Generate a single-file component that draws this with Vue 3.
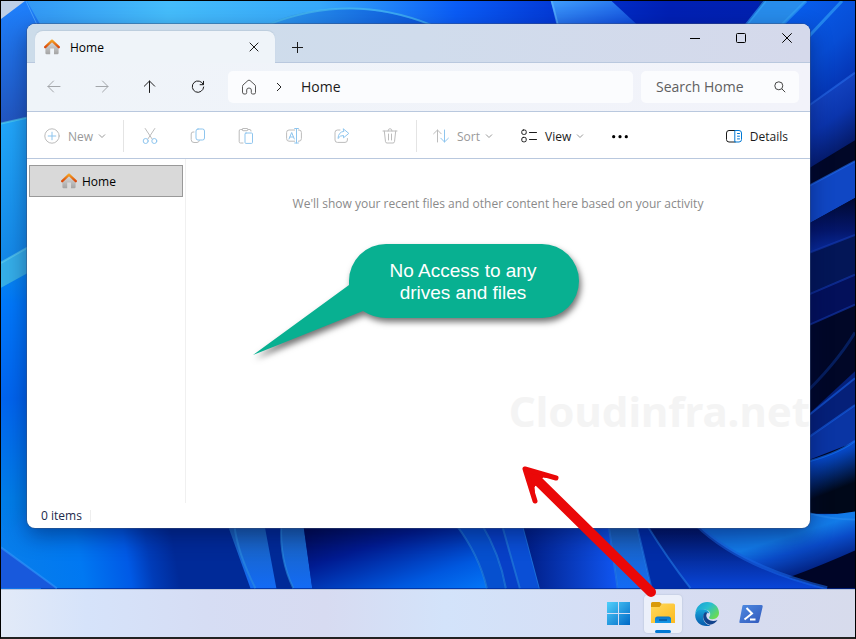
<script setup>
import { ref } from 'vue'

const searchText = ref('')
</script>

<template>
  <div class="desktop">
    <svg class="wallpaper" viewBox="0 0 856 639" preserveAspectRatio="none" aria-hidden="true">
      <defs>
        <linearGradient id="wTop" x1="0" x2="1"><stop offset="0" stop-color="#2f92f4" /><stop offset=".22" stop-color="#45bdfb" /><stop offset=".42" stop-color="#36a8fa" /><stop offset=".6" stop-color="#0a5cf6" /><stop offset=".76" stop-color="#0232cf" /><stop offset=".88" stop-color="#0020b4" /><stop offset="1" stop-color="#0021b0" /></linearGradient>
        <linearGradient id="wArc" x1="0" x2="1"><stop offset="0" stop-color="#2d9bf0" /><stop offset="1" stop-color="#0a55dd" /></linearGradient>
        <linearGradient id="wPetal" x1="0" x2="1" y2="1"><stop offset="0" stop-color="#3f9dfc" /><stop offset="1" stop-color="#0840d8" /></linearGradient>
        <linearGradient id="wDown" x2="0" y2="1"><stop offset="0" stop-color="#1e80fc" /><stop offset="1" stop-color="#2254bd" /></linearGradient>
        <linearGradient id="wLeft" x2="0" y2="1"><stop offset="0" stop-color="#0a88ee" /><stop offset=".12" stop-color="#0078fa" /><stop offset=".4" stop-color="#0064ee" /><stop offset=".7" stop-color="#007de8" /><stop offset="1" stop-color="#117bf2" /></linearGradient>
        <linearGradient id="wCyan" x2="0" y2="1"><stop offset="0" stop-color="#22a8fa" /><stop offset="1" stop-color="#1386e6" /></linearGradient>
        <linearGradient id="bA" gradientUnits="userSpaceOnUse" x1="0" y1="560" x2="170" y2="530"><stop offset="0" stop-color="#087eea" /><stop offset=".45" stop-color="#0078f2" /><stop offset=".72" stop-color="#005ae6" /><stop offset=".85" stop-color="#003cb8" /><stop offset="1" stop-color="#002a98" /></linearGradient>
        <linearGradient id="bB" x1="0" y1="0" x2="1" y2="1"><stop offset="0" stop-color="#000645" /><stop offset=".35" stop-color="#001b91" /><stop offset=".75" stop-color="#0058df" /><stop offset="1" stop-color="#0476f8" /></linearGradient>
        <linearGradient id="bBand" x2="0" y2="1"><stop offset="0" stop-color="#1b62b5" /><stop offset="1" stop-color="#136bf5" /></linearGradient>
        <linearGradient id="bC" x1="0" x2="1"><stop offset="0" stop-color="#001c83" /><stop offset="1" stop-color="#1056f2" /></linearGradient>
        <linearGradient id="bD" x2="0" y2="1"><stop offset="0" stop-color="#01115b" /><stop offset="1" stop-color="#0845d8" /></linearGradient>
        <linearGradient id="rBlue" x1="0" y1="0" x2=".5" y2="1"><stop offset="0" stop-color="#0868fb" /><stop offset=".5" stop-color="#074dd5" /><stop offset="1" stop-color="#011184" /></linearGradient>
        <linearGradient id="rMid" x1="0" y1="0" x2=".35" y2="1"><stop offset="0" stop-color="#1a52d6" /><stop offset=".55" stop-color="#0b35ad" /><stop offset="1" stop-color="#020d48" /></linearGradient>
        <linearGradient id="rDark" x2="0" y2="1"><stop offset="0" stop-color="#000930" /><stop offset=".55" stop-color="#04166a" /><stop offset="1" stop-color="#0930a8" /></linearGradient>
        <linearGradient id="rFade" x2=".3" y2="1"><stop offset="0" stop-color="#0c65f7" /><stop offset=".35" stop-color="#0646c0" /><stop offset=".8" stop-color="#000819" /></linearGradient>
        <linearGradient id="rFoot" gradientUnits="userSpaceOnUse" x1="780" y1="516" x2="800" y2="580"><stop offset="0" stop-color="#1270e0" /><stop offset=".35" stop-color="#127be8" /><stop offset=".6" stop-color="#0a4bc8" /><stop offset="1" stop-color="#011a74" /></linearGradient>
      </defs>
      <rect width="856" height="639" fill="#002a98" />
      <path d="M0 0H760V40H0Z" fill="url(#wTop)" />
      <path d="M267 23Q340-8 431 24V40H267Z" fill="url(#wArc)" />
      <path class="glow" d="M267 24Q350-9 431 24" fill="none" stroke="#4fc5ef" stroke-width="2" />
      <path d="M551 0H612L642 28H559Z" fill="url(#wPetal)" />
      <path class="glow" d="M552 0L559 28" stroke="#5fb9ff" stroke-width="2" />
      <path d="M0 0H26L60 60V125L0 128Z" fill="url(#wDown)" />
      <path d="M0 0H24L0 18Z" fill="#bdcfe6" />
      <path class="glow" d="M25 0L38 28" stroke="#66bcff" stroke-width="1" />
      <path d="M0 123L40 114V270H0Z" fill="url(#wCyan)" />
      <path class="glow" d="M0 123L40 114" stroke="#55d6ef" stroke-width="2" />
      <path d="M0 286L40 265V600H0Z" fill="url(#wLeft)" />
      <path d="M0 263L40 240V266L0 288Z" fill="#35aee8" />
      <path class="glow" d="M0 263L40 240" stroke="#65d2ed" stroke-width="2" />
      <path d="M27 510H227V590H0V549Z" fill="url(#bA)" />
      <path d="M0 549L56 590H0Z" fill="#1859dc" />
      <path class="glow" d="M0 549L56 590" stroke="#3498fb" stroke-width="2" />
      <path d="M227 526H264L276 590H250Z" fill="url(#bBand)" />
      <path class="glow" d="M234 527Q237 554 255 590" fill="none" stroke="#2c8ee0" stroke-width="2" />
      <path d="M281 526H303L312 590H293Q279 561 281 526Z" fill="url(#bBand)" />
      <path class="glow" d="M281 526Q279 561 293 590" fill="none" stroke="#2c8ee0" stroke-width="2" />
      <path d="M303 526H456Q479 556 487 590H312Z" fill="url(#bB)" />
      <path d="M456 526H482Q500 556 506 590H487Q479 556 456 526Z" fill="#0650cf" />
      <path d="M482 526H523L540 590H506Q500 556 482 526Z" fill="#0740c8" />
      <path d="M502 526H523L540 590H520Z" fill="#0a4fd6" />
      <path class="glow" d="M456 526Q479 556 487 590M482 526Q500 556 506 590M502 526L520 590M523 526L540 590" fill="none" stroke="#2784d8" stroke-width="2" />
      <path d="M523 526H609L618 590H540Z" fill="url(#bC)" />
      <path d="M609 526H637L652 590H618Z" fill="url(#bBand)" />
      <path d="M637 526H647Q668 560 691 590H652Z" fill="#002da8" />
      <path d="M647 526H697Q740 568 828 590H691Q668 560 647 526Z" fill="url(#bD)" />
      <path class="glow" d="M609 526L618 590M637 526L652 590M647 526Q668 560 691 590" fill="none" stroke="#237ce5" stroke-width="2" />
      <path d="M747 24L766 0H856V165L780 190V24Z" fill="url(#rBlue)" />
      <path d="M747 24L766 0H807L783 24Z" fill="#278ceb" />
      <path class="glow" d="M747 24L766 0M783 24L807 0M800 46L843 0" stroke="#35a7f8" stroke-width="3" />
      <path d="M800 112L856 72V165L800 185Z" fill="url(#rMid)" />
      <path class="glow" d="M800 112L856 72" stroke="#286ce9" stroke-width="2" />
      <path d="M800 174L856 140V515H800Z" fill="#010727" />
      <path d="M800 191L856 161V198L800 229Z" fill="#1047c4" />
      <path class="glow" d="M800 191L856 161" stroke="#2370f6" stroke-width="2" />
      <path d="M800 229L856 198V238L800 257Z" fill="url(#rDark)" />
      <path d="M800 257L856 235V275L800 299Z" fill="#031657" />
      <path d="M800 299L856 275V305L800 330Z" fill="#03105a" />
      <path class="glow" d="M800 257L856 235M800 299L856 275M800 330L856 305" stroke="#153bb4" stroke-width="2" />
      <path class="glow" d="M800 400Q837 365 856 333" fill="none" stroke="#0a2e82" stroke-width="3" />
      <path d="M800 424L856 372V406L800 445Z" fill="#052079" />
      <path d="M800 445L856 406V443L800 465Z" fill="#0a35a4" />
      <path class="glow" d="M800 424L856 379M800 445L856 406" stroke="#1761e8" stroke-width="2" />
      <path d="M800 465Q837 456 856 442V515H800Z" fill="url(#rFade)" />
      <path class="glow" d="M800 465Q837 456 856 442" fill="none" stroke="#1477ff" stroke-width="2" />
      <path d="M697 526L800 514Q830 518 856 513V590H828Q740 568 697 526Z" fill="url(#rFoot)" />
      <path class="glow" d="M808 514Q832 521 856 521" fill="none" stroke="#2a8cf0" stroke-width="2" />
      <path d="M790 579Q825 566 856 552V590H828Z" fill="#000527" />
      <path class="glow" d="M697 526Q740 568 828 590" fill="none" stroke="#1763e1" stroke-width="4" />
    </svg>

    <main class="workspace">
      <section class="window" aria-label="Home window">
        <header class="titlebar">
          <div class="tab">
            <svg class="home-icon" viewBox="0 0 16 16"><defs><linearGradient id="hb" x2="0" y2="1"><stop offset="0" stop-color="#dedede" /><stop offset="1" stop-color="#a4a4a4" /></linearGradient><linearGradient id="hr" x2="0" y2="1"><stop offset="0" stop-color="#f5a021" /><stop offset="1" stop-color="#d9480c" /></linearGradient></defs><path d="M1.4 7L8 1.5L14.6 7V14Q14.6 15.2 13.4 15.2H10V9.5H6.2V15.2H2.6Q1.4 15.2 1.4 14Z" fill="url(#hb)" /><path d="M1.2 8.2L8 1.6L14.8 8.2" fill="none" stroke="url(#hr)" stroke-width="2.3" stroke-linecap="round" stroke-linejoin="round" /></svg>
            <span class="tab-title">Home</span>
            <button class="tab-close" aria-label="Close tab"><svg width="10" height="10" viewBox="0 0 10 10"><path d="M.7.7L9.3 9.3M9.3.7L.7 9.3" /></svg></button>
          </div>
          <button class="tab-add" aria-label="New tab"><svg width="11" height="11" viewBox="0 0 11 11"><path d="M5.5 0V11M0 5.5H11" /></svg></button>
          <div class="caption-buttons">
            <button aria-label="Minimize"><svg width="10" height="10" viewBox="0 0 10 10"><path d="M0 5.5H10" /></svg></button>
            <button aria-label="Maximize"><svg width="10" height="10" viewBox="0 0 10 10"><rect x=".5" y=".5" width="9" height="9" rx="1" /></svg></button>
            <button aria-label="Close"><svg width="10" height="10" viewBox="0 0 10 10"><path d="M.3.3L9.7 9.7M9.7.3L.3 9.7" /></svg></button>
          </div>
        </header>

        <nav class="navbar">
          <button class="nav-button" disabled aria-label="Back"><svg class="line" viewBox="0 0 16 16"><path d="M14 7.5H2M7.5 2L2 7.5L7.5 13" /></svg></button>
          <button class="nav-button" disabled aria-label="Forward"><svg class="line" viewBox="0 0 16 16"><path d="M2 7.5H14M8.5 2L14 7.5L8.5 13" /></svg></button>
          <button class="nav-button" aria-label="Up"><svg class="line" viewBox="0 0 16 16"><path d="M7.5 13.5V2M2.3 7.2L7.5 2L12.7 7.2" /></svg></button>
          <button class="nav-button" aria-label="Refresh"><svg class="line" viewBox="0 0 16 16"><path d="M13.5 2.3V5.7H10.1M13.3 5.5A5.7 5.7 0 1 0 13.7 8" /></svg></button>
          <div class="address">
            <button class="address-home" aria-label="Home location"><svg class="line" viewBox="0 0 16 16"><path d="M1.5 7.2Q1.5 6.5 2 6L7 1.5Q8 .8 9 1.5L14 6Q14.5 6.5 14.5 7.2V13.5Q14.5 15 13 15H11.7Q10.3 15 10.3 13.7V11Q10.3 9 8 9T5.7 11V13.7Q5.7 15 4.3 15H3Q1.5 15 1.5 13.5Z" /></svg></button>
            <svg class="crumb-arrow" viewBox="0 0 8 10"><path d="M2 1L6 5L2 9" /></svg>
            <button class="crumb">Home</button>
          </div>
          <label class="search">
            <input v-model="searchText" type="text" placeholder="Search Home" aria-label="Search Home" />
            <svg viewBox="0 0 12 12"><circle cx="4.8" cy="4.8" r="4" /><path d="M7.8 7.8L11.2 11.2" /></svg>
          </label>
        </nav>

        <div class="toolbar">
          <button class="tool new" disabled>
            <svg class="line" viewBox="0 0 16 16"><circle cx="8" cy="8" r="7.2" /><path class="blue" d="M8 4.2V11.8M4.2 8H11.8" /></svg>
            <span>New</span>
            <svg class="chevron" viewBox="0 0 8 8"><path d="M1 2.5L4 5.5L7 2.5" /></svg>
          </button>
          <i class="separator after-new"></i>
          <button class="tool icon-only" disabled aria-label="Cut"><svg class="line" viewBox="0 0 16 16"><path d="M3.2.5L10 10.8M12.8.5L6 10.8" /><circle class="blue" cx="3.7" cy="13" r="2.5" /><circle class="blue" cx="12.3" cy="13" r="2.5" /></svg></button>
          <button class="tool icon-only" disabled aria-label="Copy"><svg class="line" viewBox="0 0 16 16"><path d="M4 4H3Q1.2 4 1.2 6V11.5Q1.2 14.5 4 14.5H7Q9 14.5 9.4 12.5" /><rect class="blue" x="6" y="1" width="8.5" height="11" rx="2" /></svg></button>
          <button class="tool icon-only" disabled aria-label="Paste"><svg class="line" viewBox="0 0 16 16"><path d="M5 15H2.5Q1.2 15 1.2 13.7V3Q1.2 1.5 2.5 1.5H4M10 1.5H12Q13 1.5 13 3M4 1.5Q4 .5 5 .5H9Q10 .5 10 1.5T9 2.7H5Q4 2.7 4 1.5Z" /><rect class="blue" x="7" y="5" width="7.5" height="10.4" rx="1" /></svg></button>
          <button class="tool icon-only" disabled aria-label="Rename"><svg class="line" viewBox="0 0 16 16"><path d="M8.7 2H3Q.6 2 .6 4.5V10.5Q.6 13.2 3 13.2H8.7M12.4 2H13Q15.4 2 15.4 4.5V10.5Q15.4 13.2 13 13.2H12.4" /><path class="blue" d="M8.7.5H12.4M10.5.5V15M8.7 15H12.4M3 11L5.7 4.5L8.3 11M4 9H7.4" /></svg></button>
          <button class="tool icon-only" disabled aria-label="Share"><svg class="line" viewBox="0 0 16 16"><path d="M6 2H3.5Q1 2 1 4.5V12Q1 14.4 3.5 14.4H11Q13.4 14.4 13.4 12V10.5" /><path class="blue" d="M9.5 1L14.8 5.4L9.5 9.8V7.5Q6 7.3 4 10.5Q4.4 4 9.5 3.4Z" /></svg></button>
          <button class="tool icon-only" disabled aria-label="Delete"><svg class="line" viewBox="0 0 16 16"><path d="M1 3H15M6 3Q6 .7 8 .7T10 3M2.3 3L3.5 13.7Q3.7 15 5 15H11Q12.3 15 12.5 13.7L13.7 3M6.5 6V12M9.5 6V12" /></svg></button>
          <i class="separator after-delete"></i>
          <button class="tool menu" disabled>
            <svg class="line" viewBox="0 0 16 16"><path d="M4.5 14V2M.6 5.8L4.5 2L8.2 5.8" /><path class="blue" d="M11.5 2V14M7.8 10.2L11.5 14L15.4 10.2" /></svg>
            <span>Sort</span>
            <svg class="chevron" viewBox="0 0 8 8"><path d="M1 2.5L4 5.5L7 2.5" /></svg>
          </button>
          <button class="tool menu">
            <svg class="line" viewBox="0 0 16 16"><rect x=".8" y="2" width="4.4" height="4.4" rx="1.5" /><rect x=".8" y="9.4" width="4.4" height="4.4" rx="1.5" /><path d="M8.5 4.5H15.5M8.5 11.5H15.5" /></svg>
            <span>View</span>
            <svg class="chevron" viewBox="0 0 8 8"><path d="M1 2.5L4 5.5L7 2.5" /></svg>
          </button>
          <button class="tool icon-only" aria-label="See more"><svg width="16" height="16" viewBox="0 0 16 16"><circle cx="1.7" cy="8.7" r="1.6" /><circle cx="8" cy="8.7" r="1.6" /><circle cx="14.3" cy="8.7" r="1.6" /></svg></button>
          <button class="tool details">
            <svg class="line" viewBox="0 0 16 16"><path d="M9.2 2.5H3Q.5 2.5 .5 5V11.5Q.5 14 3 14H9.2" /><path class="accent" d="M9.2 2.5H13Q15.5 2.5 15.5 5V11.5Q15.5 14 13 14H9.2ZM11.5 5.5H13.5M11.5 8.2H13.5M11.5 10.9H13.5" /></svg>
            <span>Details</span>
          </button>
        </div>

        <div class="content">
          <aside class="sidebar">
            <button class="tree-item">
              <svg class="home-icon" viewBox="0 0 16 16"><path d="M1.4 7L8 1.5L14.6 7V14Q14.6 15.2 13.4 15.2H10V9.5H6.2V15.2H2.6Q1.4 15.2 1.4 14Z" fill="url(#hb)" /><path d="M1.2 8.2L8 1.6L14.8 8.2" fill="none" stroke="url(#hr)" stroke-width="2.3" stroke-linecap="round" stroke-linejoin="round" /></svg>
              <span>Home</span>
            </button>
          </aside>
          <div class="files">
            <p class="empty">We'll show your recent files and other content here based on your activity</p>
            <div class="watermark">Cloudinfra.net</div>
          </div>
        </div>

        <footer class="status"><span>0 items</span></footer>

        <div class="callout">
          <svg viewBox="0 0 332 118" aria-hidden="true"><path d="M133 1H289A37 37 0 0 1 289 75H133Q121 75 110 68L0 112L96 42V38A37 37 0 0 1 133 1Z" /></svg>
          <p>No Access to any<br />drives and files</p>
        </div>
      </section>
    </main>

    <footer class="taskbar">
      <button class="app" aria-label="Start">
        <svg width="24" height="24" viewBox="0 0 24 24"><defs><linearGradient id="ws" x2="1" y2="1"><stop offset="0" stop-color="#4fd0fb" /><stop offset="1" stop-color="#0068c6" /></linearGradient></defs><path d="M0 0H11V11H0ZM12 0H23V11H12ZM0 12H11V23H0ZM12 12H23V23H12Z" fill="url(#ws)" /></svg>
      </button>
      <button class="app active" aria-label="File Explorer">
        <svg width="24" height="22" viewBox="0 0 24 22"><defs><linearGradient id="fy" x2="1" y2="1"><stop offset="0" stop-color="#ffd95c" /><stop offset="1" stop-color="#fbba20" /></linearGradient><linearGradient id="fb" x2="0" y2="1"><stop offset="0" stop-color="#0875c9" /><stop offset="1" stop-color="#1499e9" /></linearGradient></defs><path d="M0 1.5Q0 0 1.5 0H8.5L11 2L9 5H0Z" fill="#d99a0b" /><path d="M0 5H8.5L11.5 1.5H22.5Q24 1.5 24 3V21H0Z" fill="url(#fy)" /><path d="M4 21V17Q4 14.5 6.5 14.5H17.5Q20 14.5 20 17V21Z" fill="url(#fb)" /><path d="M8 18H16" stroke="#07599e" stroke-width="1.5" /></svg>
      </button>
      <button class="app" aria-label="Edge">
        <svg width="24" height="24" viewBox="0 0 24 24"><defs><linearGradient id="eg" x1="0" y1="0" x2="1" y2=".7"><stop offset="0" stop-color="#159bd9" /><stop offset=".5" stop-color="#29bfd0" /><stop offset="1" stop-color="#6cdc50" /></linearGradient><linearGradient id="eb" x2="0" y2="1"><stop offset="0" stop-color="#17a5d9" /><stop offset="1" stop-color="#0759ac" /></linearGradient></defs><path d="M.3 11.5C1 4.5 6 0 12.2 0C19 0 24 5 24 10.8C24 15 21 17.2 17.3 17.2C14.5 17.2 13.3 16 14.4 14.8C17 11.3 13.5 7.5 9 7.6C4.8 7.7 1.5 9 .3 11.5Z" fill="url(#eg)" /><path d="M.2 12.8C.5 9 4 6.8 8.5 7.2C12 7.5 14.2 9.2 14.2 11.5C11 9.2 7.5 12.5 8.3 16.5C9 20.5 12 22.8 15.5 23.4C7 25.8-.3 20 .2 12.8Z" fill="url(#eb)" /><path d="M9.8 10.5C6.5 14 8.3 20.5 14.5 22.8C18 22.5 21 20.5 22.5 18C16.5 20.5 11.2 17.5 11.3 13.3Q11.4 11.5 12.7 10.7Q11 9.7 9.8 10.5Z" fill="#12438c" /></svg>
      </button>
      <button class="app" aria-label="PowerShell">
        <svg width="24" height="20" viewBox="0 0 24 20"><defs><linearGradient id="ps" x2="1" y2="1"><stop offset="0" stop-color="#4e8be2" /><stop offset="1" stop-color="#3158bb" /></linearGradient></defs><path d="M4.5 1H22.5Q24 1 23.7 2.5L20.2 17.5Q19.8 19 18.4 19H1.4Q0 19 .4 17.5L3.4 2Q3.6 1 4.5 1Z" fill="url(#ps)" /><path d="M7.5 4L13 9.5L5.5 15.5M11 15.5H16.5" fill="none" stroke="#fff" stroke-width="2" /></svg>
      </button>
    </footer>

    <svg class="arrow" viewBox="0 0 140 140" aria-hidden="true"><path d="M5 9L37 19L24 18L15 28L16 42Z" /><path class="wings" d="M16 42L6 10L37 19" /><path class="shaft" d="M17 20L132 133" /></svg>
  </div>
</template>

<style>
body { margin: 0; }
</style>

<style scoped>
* { box-sizing: border-box; }
.desktop { position: relative; display: flex; flex-direction: column; height: 100vh; border: 1px solid #000; border-bottom: 2px solid #222; overflow: hidden; font-family: "Open Sans", "Noto Sans", sans-serif; font-size: 12px; color: #1b1b1b; }
button { display: flex; align-items: center; justify-content: center; margin: 0; padding: 0; border: 0; background: none; font: inherit; color: inherit; }
svg { display: block; flex: none; }
p { margin: 0; }
.wallpaper { position: absolute; inset: 0; width: 100%; height: 100%; }
.glow { opacity: .6; }
.workspace { flex: 1; display: flex; min-height: 0; padding: 23px 45px 61px 26px; }
.window { position: relative; flex: 1; display: flex; flex-direction: column; min-width: 0; border-radius: 8px; background: #fff; box-shadow: 0 0 0 1px rgba(60, 80, 120, .45), 0 8px 22px rgba(0, 10, 60, .45); }

.titlebar { display: flex; height: 39px; padding-left: 8px; border-bottom: 1px solid #b9c8de; border-radius: 8px 8px 0 0; background: linear-gradient(90deg, #ccdcea, #d0dcec 50%, #d5d9eb); }
.titlebar svg { fill: none; stroke: #1b1b1b; }
.tab { display: flex; align-items: center; width: 240px; height: 32px; margin-top: 7px; padding: 0 16px 0 9px; border-radius: 8px 8px 0 0; background: #eff4f9; box-shadow: 0 -1px 1px #bccddd; clip-path: inset(-2px -2px 0 -2px); }
.tab .home-icon { stroke: none; }
.home-icon { width: 16px; height: 16px; }
.tab-title { flex: 1; padding-left: 10px; color: #000; }
.tab-add { width: 45px; padding-top: 9px; }
.caption-buttons { display: flex; margin-left: auto; }
.caption-buttons button { width: 46px; height: 28px; }
.caption-buttons svg { stroke: #000; }

.navbar { display: flex; height: 49px; padding: 8px 11px 8px 3px; border-bottom: 1px solid #b9c8de; background: linear-gradient(90deg, #eff4f9, #f2f3fa); }
.line { width: 16px; height: 16px; fill: none; stroke: currentColor; stroke-linecap: round; stroke-linejoin: round; }
.nav-button { width: 48px; height: 32px; }
.nav-button:disabled { color: #a3a6aa; }
.address { flex: 1; display: flex; align-items: center; height: 32px; margin: 0 8px 0 6px; padding-left: 13px; border-radius: 5px; background: #fbfcfe; font-size: 14px; }
.address-home { color: #555; }
.crumb { padding-bottom: 2px; }
.crumb-arrow { width: 8px; height: 10px; margin: 0 18px; fill: none; stroke: #222; }
.search { display: flex; align-items: center; width: 158px; height: 32px; padding: 0 13px 0 15px; border-radius: 5px; background: #fbfcfe; }
.search input { flex: 1; min-width: 0; padding: 0 0 2px; border: 0; outline: 0; background: none; font: inherit; font-size: 14px; }
.search input::placeholder { color: #606060; opacity: 1; }
.search svg { width: 12px; height: 12px; fill: none; stroke: #444; }

.toolbar { display: flex; height: 47px; border-bottom: 1px solid #b9c8de; }
.tool { justify-content: flex-start; height: 48px; gap: 8px; }
.tool:disabled { color: #999; }
.tool:disabled .line { color: #bcbcbc; }
.tool .blue { stroke: #8ec5ee; }
.tool .accent { stroke: #0078d4; }
.new { width: 96px; padding-left: 17px; }
.tool.icon-only { justify-content: center; width: 48px; }
.menu { padding-left: 16px; width: 88px; }
.menu + .menu + .icon-only { margin-left: 3px; }
.details { margin-left: auto; padding-right: 22px; }
.chevron { width: 8px; height: 8px; margin-left: -3px; fill: none; stroke: #999; }
.separator { width: 1px; height: 32px; margin-top: 8px; background: #e4e4e4; }
.after-new { margin-right: 2px; }
.after-delete { margin-left: 2px; }

.content { flex: 1; display: flex; min-height: 0; }
.sidebar { width: 159px; padding: 6px 2px; border-right: 1px solid #f0f0f0; }
.tree-item { justify-content: flex-start; gap: 5px; width: 154px; height: 32px; padding-left: 31px; border: 1px solid #999; background: #d9d9d9; color: #000; }
.files { position: relative; flex: 1; min-width: 0; }
.empty { padding-top: 36px; line-height: 18px; text-align: center; color: #8a8a8a; }
.watermark { position: absolute; right: 0; top: 222px; font-family: "Noto Sans", "Open Sans", sans-serif; font-size: 42px; line-height: 60px; font-weight: 700; color: #f4f4f4; }
.status { display: flex; align-items: center; height: 25px; padding-left: 14px; color: #1b2a4d; }
.status span { padding-right: 8px; border-right: 1px solid #eee; line-height: 12px; }

.callout { position: absolute; left: 226px; top: 219px; width: 332px; height: 118px; }
.callout svg { position: absolute; inset: 0; fill: #08b091; overflow: visible; filter: drop-shadow(2px 4px 3px rgba(0, 0, 0, .55)); }
.callout p { position: relative; padding: 17px 8px 0 96px; font-family: "Liberation Sans", Arial, sans-serif; font-size: 19px; line-height: 22px; text-align: center; color: #fff; }

.taskbar { position: relative; display: flex; align-items: center; justify-content: flex-end; gap: 6px; height: 48px; padding-right: 85px; border-top: 1px solid #b8c4dc; background: linear-gradient(90deg, #e2eaf8, #d6e3fa 10%, #d6ddf4 24%, #d7dbf1 38%, #d3e3fa 52%, #d6ddf3 75%, #d7dbec); }
.app { position: relative; width: 38px; height: 38px; border-radius: 4px; }
.active { background: #ecf0fa; box-shadow: 0 0 1px 1px rgba(190, 200, 220, .5); }
.active svg { margin-bottom: 2px; }
.active::after { content: ""; position: absolute; left: 11px; bottom: 0; width: 16px; height: 3px; border-radius: 2px; background: #0078d4; }
.arrow { position: absolute; left: 518px; top: 458px; width: 140px; height: 140px; fill: #ea0808; stroke: #ea0808; stroke-linecap: round; stroke-linejoin: round; }
.wings { fill: none; stroke-width: 5px; }
.shaft { stroke-width: 10px; }
</style>
